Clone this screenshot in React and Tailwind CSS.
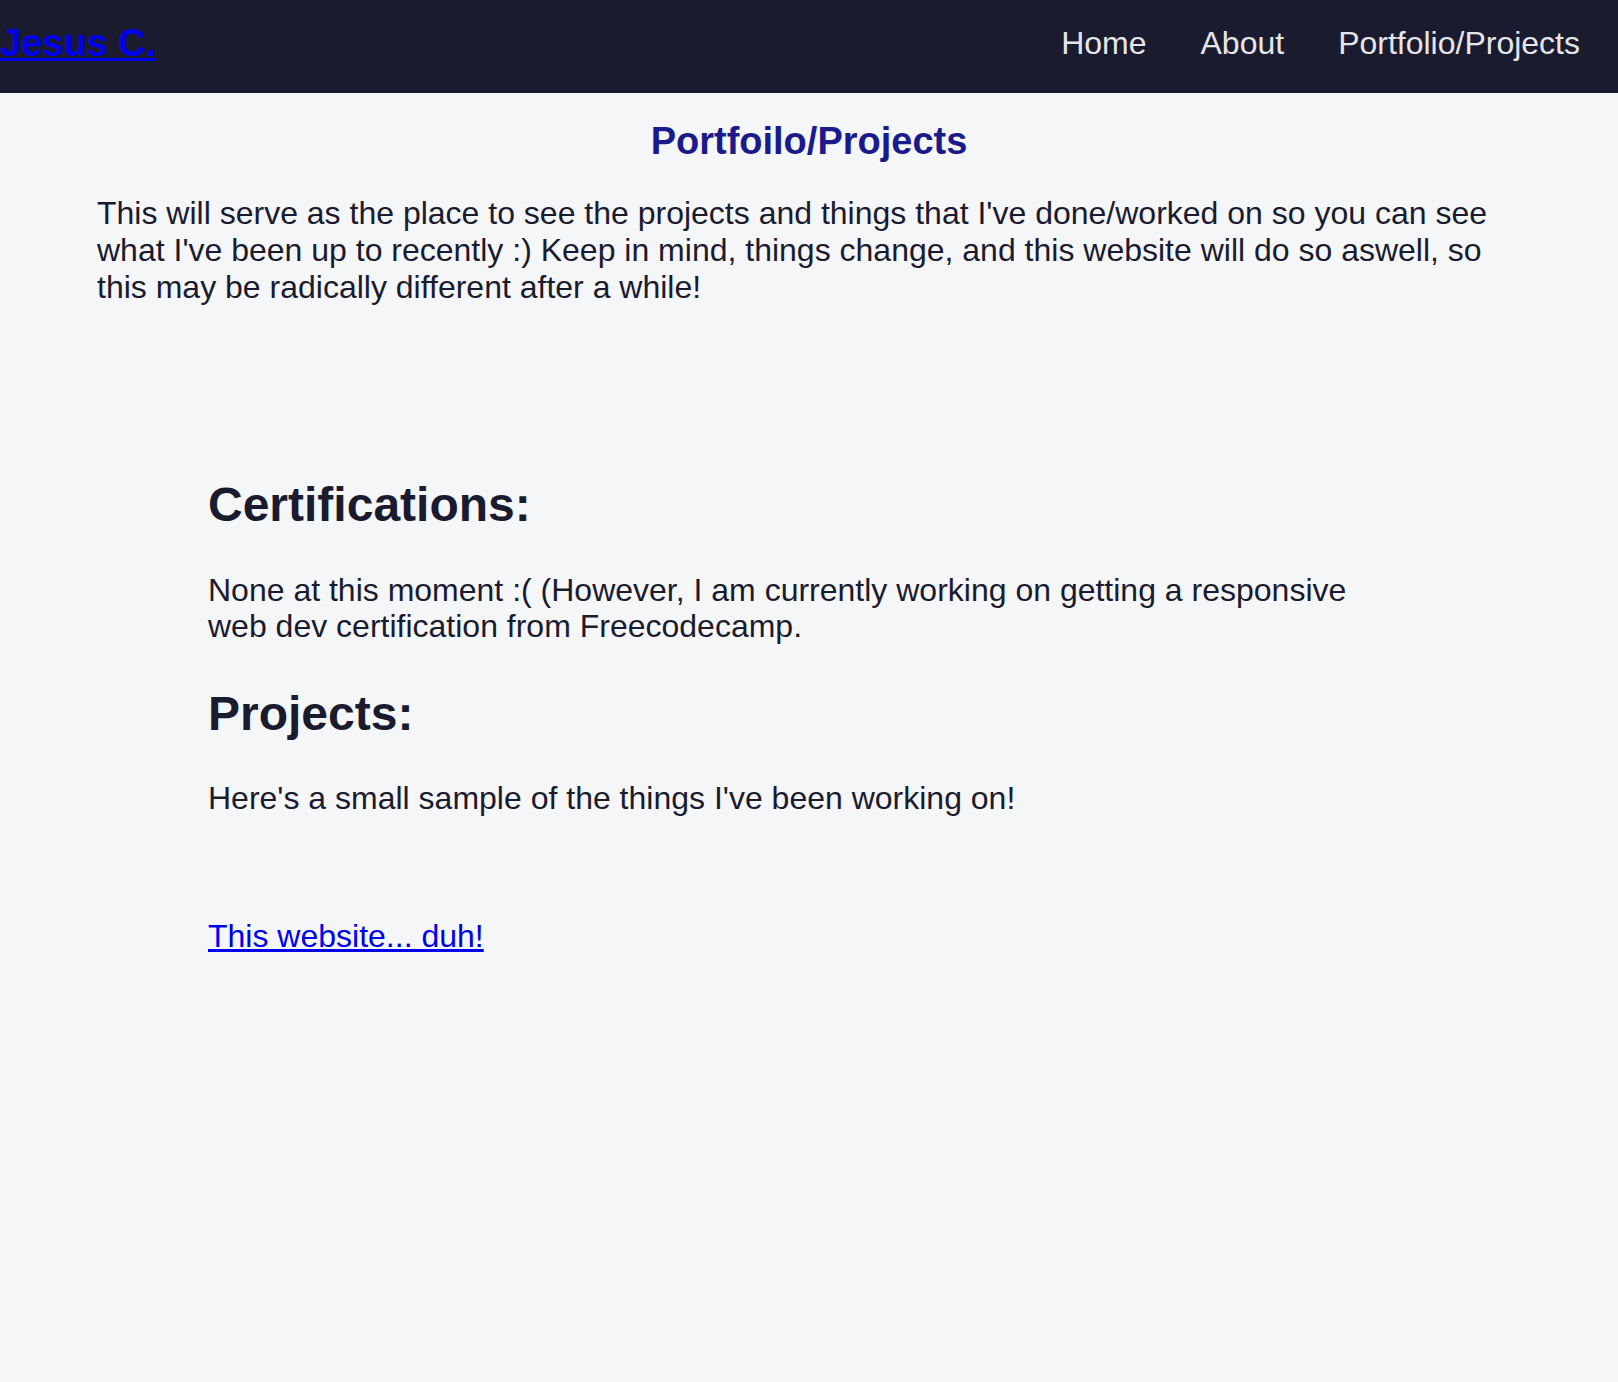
export default function App() {
  return (
    <div className="min-h-screen bg-[#f5f6f8] font-['Liberation_Sans',Arial,sans-serif] text-[#1b1b2f]">
      <nav className="flex h-[93px] justify-between bg-[#1b1b2f]">
        <div className="pt-[22px]">
          <a href="#" className="text-[38px] font-bold leading-[43.7px] text-[#0000ee] underline">
            Jesus C.
          </a>
        </div>
        <ul className="flex gap-[54px] pr-[38px] pt-[24.5px] text-[32px] leading-[36.8px] text-[#e5e5ea]">
          <li>Home</li>
          <li>About</li>
          <li>Portfolio/Projects</li>
        </ul>
      </nav>

      <h1 className="mt-[27px] text-center text-[38px] font-bold leading-[43.7px] text-[#1a1a8c]">
        Portfoilo/Projects
      </h1>
      <p className="mx-[97px] mt-[31.6px] text-[32px] leading-[36.7px]">
        This will serve as the place to see the projects and things that I've done/worked on so you can see what I've been up to recently :) Keep in mind, things change, and this website will do so aswell, so this may be radically different after a while!
      </p>

      <section className="mx-[208px] mt-[171.8px]">
        <h2 className="text-[48px] font-bold leading-[55.2px]">Certifications:</h2>
        <p className="mt-[39.3px] text-[32px] leading-[36.7px]">
          None at this moment :( (However, I am currently working on getting a responsive web dev certification from Freecodecamp.
        </p>
        <h2 className="mt-[40.9px] text-[48px] font-bold leading-[55.2px]">Projects:</h2>
        <p className="mt-[39.1px] text-[32px] leading-[36.8px]">
          Here's a small sample of the things I've been working on!
        </p>
        <div className="mt-[100.6px] text-[32px] leading-[36.8px]">
          <a href="#" className="text-[#0000ee] underline">
            This website... duh!
          </a>
        </div>
      </section>
    </div>
  );
}
